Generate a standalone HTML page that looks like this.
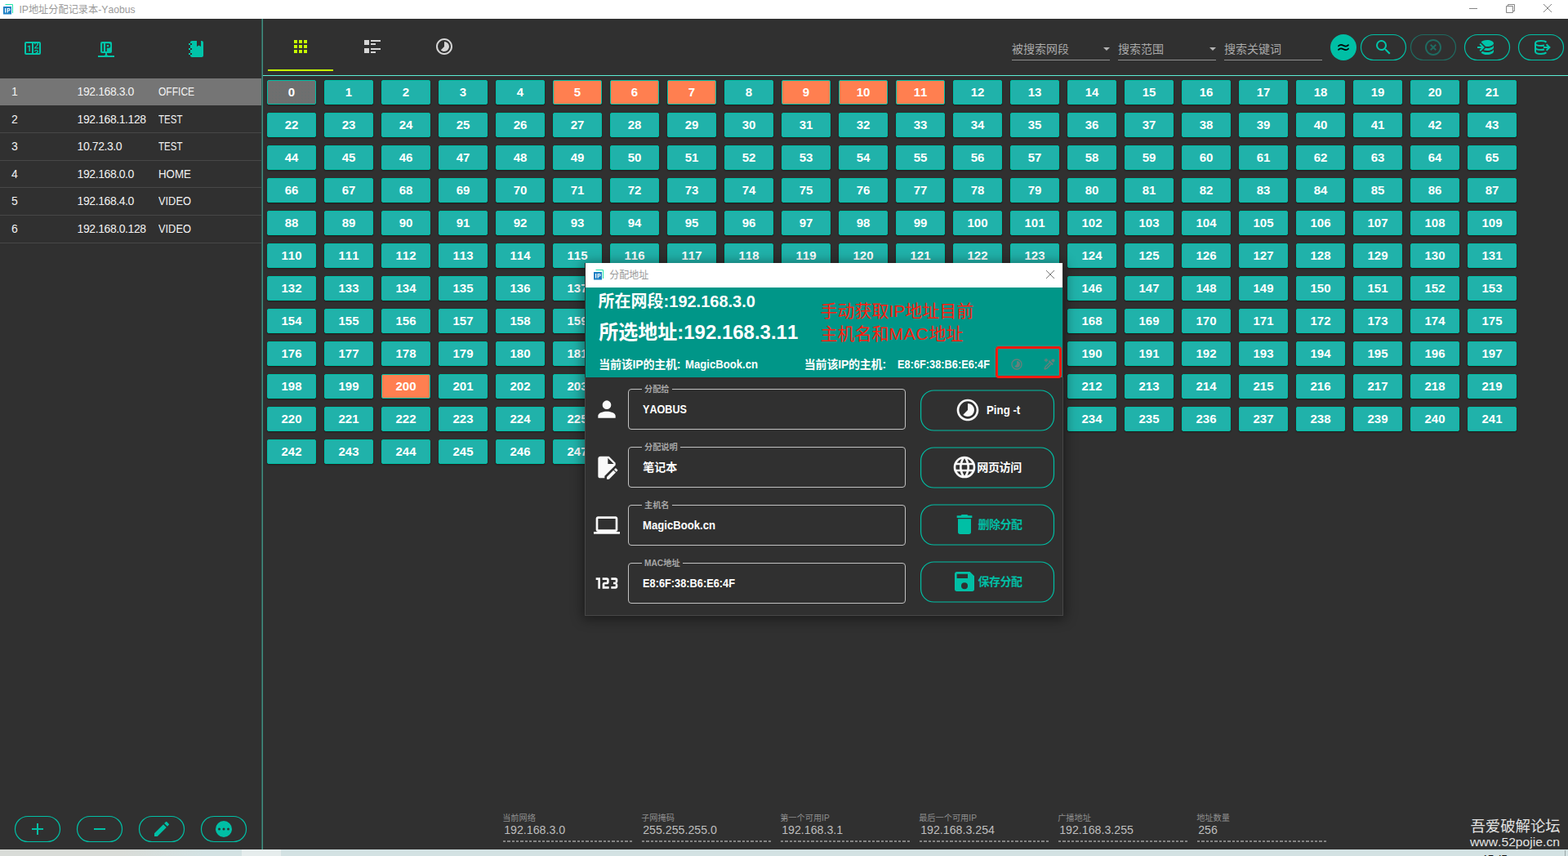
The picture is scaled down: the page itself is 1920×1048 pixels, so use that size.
<!DOCTYPE html>
<html lang="zh-CN"><head><meta charset="utf-8"><title>IP地址分配记录本-Yaobus</title>
<style>
*{box-sizing:border-box}
html,body{margin:0;padding:0;width:1920px;height:1048px;overflow:hidden;background:#303030}
#app{font-kerning:none;width:1920px;height:1048px;position:relative;overflow:hidden;background:#303030;font-family:"Liberation Sans","Noto Sans CJK SC",sans-serif;color:#fff}
.a{position:absolute}
.t{position:absolute;white-space:nowrap}
svg.i{position:absolute;fill:currentColor;overflow:visible}
svg.nf{fill:none}
.sx{display:inline-block;transform-origin:0 50%}
b{font-weight:bold}
/* title bar */
#titlebar{left:0;top:0;width:1920px;height:23px;background:#fff}
/* sidebar */
.row{left:0;width:320px;border-bottom:1px solid #474747}
.row.sel{background:#757575;border-bottom:0}
.rt{color:#f2f2f2}
/* pills */
/* grid */
#grid{left:327px;top:98px;width:1530px;display:grid;grid-template-columns:repeat(22,60px);column-gap:10px;row-gap:10px}
#grid div{height:30px;background:#20b2aa;border:1px solid #00bfa5;border-radius:2px;font-weight:bold;font-size:15px;line-height:28px;text-align:center;color:#fff;box-shadow:0 1px 2px rgba(0,0,0,.45)}
#grid div.o{background:#ff7f50}
#grid div.g{background:#6f6f6f radial-gradient(circle,#5d7373 .55px,transparent .75px) 0 0/4px 4px}
/* status */
.sl{color:#8e8e8e}
.sv{color:#bdbdbd}
.dash{position:absolute;height:2px;width:160px;top:1029px;background:repeating-linear-gradient(90deg,#8d8d8d 0,#8d8d8d 3.3px,transparent 3.3px,transparent 5.33px);opacity:.9}
/* dialog */
#dlg{left:716px;top:322px;width:586px;height:432px;background:#303030;box-shadow:0 2px 14px 2px rgba(0,0,0,.45)}
.fld{position:absolute;left:769px;width:340px;height:50px;border:1px solid #c2c2c2;border-radius:4px}
.fl{color:#a6a6a6;background:#303030;font-weight:bold}
.btn{position:absolute;left:1127px;width:164px;height:50.5px;border:1px solid #0e9a89;border-radius:20px}
.fv{font-weight:bold;color:#fff}
.teal{color:#00bfa5}
</style></head><body><div id="app">
<div id="titlebar" class="a"></div>
<svg class="i" viewBox="0 0 12 13" style="left:4px;top:5px;width:12px;height:13px"><rect x="0" y="3" width="10" height="9.500" fill="#1b7fc4"/><path d="M2.500 0.500h9v10.500" fill="none" stroke="#1ee6a8" stroke-width="1"/><path d="M2 5h1.200v5.500H2zM4.600 5h2.400a1.700 1.700 0 0 1 0 3.400H5.800v2.100H4.600zM5.800 6h1a.700.700 0 0 1 0 1.400h-1z" fill="#fff" fill-rule="evenodd"/></svg>
<div class="t" style="left:23.4px;top:5px;font-size:12.2px;line-height:14px;color:#9a9a9a">IP地址分配记录本-Yaobus</div>
<svg class="i nf" viewBox="0 0 140 23" style="left:1780px;top:0;width:140px;height:23px" stroke="#858585" stroke-width="1"><path d="M19 10.500h10"/><path d="M64.500 7.500h8v8h-8zM66.500 7.500v-2h8v8h-2"/><path d="M110 5l10 10M120 5l-10 10"/></svg>
<div class="a" style="left:320px;top:23px;width:1px;height:1017px;background:#2d645c"></div>
<div class="a" style="left:321px;top:23px;width:1px;height:1017px;background:#448d80"></div>
<div class="a" style="left:322px;top:92px;width:1598px;height:1px;background:#5cefd6"></div>
<svg class="i" viewBox="0 0 24 24" style="left:28px;top:47px;width:24px;height:24px;color:#00c5aa;"><path d="M4,4H20A2,2 0 0,1 22,6V18A2,2 0 0,1 20,20H4A2,2 0 0,1 2,18V6A2,2 0 0,1 4,4M4,6V18H11V6H4M20,18V6H18.76C19,6.54 18.95,7.07 18.95,7.13C18.88,7.8 18.41,8.5 18.24,8.75L15.91,11.3L19.23,11.28L19.24,12.5L14.04,12.47L14,11.47C14,11.47 17.05,8.24 17.2,7.95C17.34,7.67 17.91,6 16.5,6C15.27,6.05 15.41,7.3 15.41,7.3L13.87,7.31C13.87,7.31 13.88,6.65 14.25,6H13V18H15.58L15.57,17.14L16.54,17.13C16.54,17.13 17.45,16.97 17.46,16.08C17.5,15.08 16.65,15.08 16.5,15.08C16.37,15.08 15.43,15.13 15.43,15.95H13.91C13.91,15.95 13.95,13.89 16.5,13.89C19.1,13.89 18.96,15.91 18.96,15.91C18.96,15.91 19,17.16 17.85,17.63L18.37,18H20M8.92,16H7.42V10.2L5.62,10.76V9.53L8.76,8.41H8.92V16Z"/></svg>
<svg class="i" viewBox="0 0 24 24" style="left:118px;top:47px;width:24px;height:24px;color:#00c5aa;"><path fill-rule="evenodd" d="M7 4h10a2 2 0 0 1 2 2v10a2 2 0 0 1-2 2h-4v2l1.500 1h7.500v2H2v-2h7.500l1.500-1v-2H7a2 2 0 0 1-2-2V6a2 2 0 0 1 2-2zM7.200 6.300h1.700v9.600H7.200zM11.100 6.300h4.100a2 2 0 0 1 2 2v1.500a2 2 0 0 1-2 2h-2.400v4.100h-1.700zM12.800 7.900h2.500v2.300h-2.500z"/></svg>
<svg class="i" viewBox="0 0 24 24" style="left:228px;top:48px;width:24px;height:24px;color:#00c4a9;"><path d="M3,7V5H5V4C5,2.89 5.9,2 7,2H13V9L15.5,7.5L18,9V2H19C20.05,2 21,2.95 21,4V20C21,21.05 20.05,22 19,22H7C5.95,22 5,21.05 5,20V19H3V17H5V13H3V11H5V7H3M7,11H5V13H7V11M7,7V5H5V7H7M7,19V17H5V19H7Z"/></svg>
<div class="row a sel" style="top:96px;height:33px"></div>
<div class="t rt" style="left:14px;top:104px;font-size:14px;line-height:16px;">1</div>
<div class="t rt" style="left:94.6px;top:104px;font-size:14px;line-height:16px;"><span class="sx" style="letter-spacing:-0.42px">192.168.3.0</span></div>
<div class="t rt" style="left:194px;top:104px;font-size:14px;line-height:16px;"><span class="sx nm" style="transform:scaleX(0.859)">OFFICE</span></div>
<div class="row a" style="top:130px;height:33px"></div>
<div class="t rt" style="left:14px;top:138px;font-size:14px;line-height:16px;">2</div>
<div class="t rt" style="left:94.6px;top:138px;font-size:14px;line-height:16px;"><span class="sx" style="letter-spacing:-0.42px">192.168.1.128</span></div>
<div class="t rt" style="left:194px;top:138px;font-size:14px;line-height:16px;"><span class="sx nm" style="transform:scaleX(0.822)">TEST</span></div>
<div class="row a" style="top:163px;height:34px"></div>
<div class="t rt" style="left:14px;top:171px;font-size:14px;line-height:16px;">3</div>
<div class="t rt" style="left:94.6px;top:171px;font-size:14px;line-height:16px;"><span class="sx" style="letter-spacing:-0.42px">10.72.3.0</span></div>
<div class="t rt" style="left:194px;top:171px;font-size:14px;line-height:16px;"><span class="sx nm" style="transform:scaleX(0.822)">TEST</span></div>
<div class="row a" style="top:197px;height:33px"></div>
<div class="t rt" style="left:14px;top:205px;font-size:14px;line-height:16px;">4</div>
<div class="t rt" style="left:94.6px;top:205px;font-size:14px;line-height:16px;"><span class="sx" style="letter-spacing:-0.42px">192.168.0.0</span></div>
<div class="t rt" style="left:194px;top:205px;font-size:14px;line-height:16px;"><span class="sx nm" style="transform:scaleX(0.95)">HOME</span></div>
<div class="row a" style="top:230px;height:34px"></div>
<div class="t rt" style="left:14px;top:238px;font-size:14px;line-height:16px;">5</div>
<div class="t rt" style="left:94.6px;top:238px;font-size:14px;line-height:16px;"><span class="sx" style="letter-spacing:-0.42px">192.168.4.0</span></div>
<div class="t rt" style="left:194px;top:238px;font-size:14px;line-height:16px;"><span class="sx nm" style="transform:scaleX(0.916)">VIDEO</span></div>
<div class="row a" style="top:264px;height:34px"></div>
<div class="t rt" style="left:14px;top:272px;font-size:14px;line-height:16px;">6</div>
<div class="t rt" style="left:94.6px;top:272px;font-size:14px;line-height:16px;"><span class="sx" style="letter-spacing:-0.42px">192.168.0.128</span></div>
<div class="t rt" style="left:194px;top:272px;font-size:14px;line-height:16px;"><span class="sx nm" style="transform:scaleX(0.916)">VIDEO</span></div>
<svg class="i nf" viewBox="0 0 56 32" style="left:18px;top:999px;width:56px;height:32px"><rect x="0.500" y="0.500" width="55" height="31" rx="15.500" stroke="#00bfa5" stroke-width="1.200"/></svg>
<svg class="i" viewBox="0 0 24 24" style="left:34px;top:1003px;width:24px;height:24px;color:#00bfa5;"><path d="M19,13H13V19H11V13H5V11H11V5H13V11H19V13Z"/></svg>
<svg class="i nf" viewBox="0 0 56 32" style="left:94px;top:999px;width:56px;height:32px"><rect x="0.500" y="0.500" width="55" height="31" rx="15.500" stroke="#00bfa5" stroke-width="1.200"/></svg>
<svg class="i" viewBox="0 0 24 24" style="left:110px;top:1003px;width:24px;height:24px;color:#00bfa5;"><path d="M19,13H5V11H19V13Z"/></svg>
<svg class="i nf" viewBox="0 0 56 32" style="left:170px;top:999px;width:56px;height:32px"><rect x="0.500" y="0.500" width="55" height="31" rx="15.500" stroke="#00bfa5" stroke-width="1.200"/></svg>
<svg class="i" viewBox="0 0 24 24" style="left:186px;top:1003px;width:24px;height:24px;color:#00bfa5;"><path d="M20.71,7.04C21.1,6.65 21.1,6 20.71,5.63L18.37,3.29C18,2.9 17.35,2.9 16.96,3.29L15.12,5.12L18.87,8.87M3,17.25V21H6.75L17.81,9.93L14.06,6.18L3,17.25Z"/></svg>
<svg class="i nf" viewBox="0 0 56 32" style="left:246px;top:999px;width:56px;height:32px"><rect x="0.500" y="0.500" width="55" height="31" rx="15.500" stroke="#00bfa5" stroke-width="1.200"/></svg>
<svg class="i" viewBox="0 0 24 24" style="left:262px;top:1003px;width:24px;height:24px;color:#00bfa5;"><path d="M12,2A10,10 0 0,1 22,12A10,10 0 0,1 12,22A10,10 0 0,1 2,12A10,10 0 0,1 12,2M12,10.5A1.5,1.500 0 0,0 10.5,12A1.5,1.500 0 0,0 12,13.5A1.5,1.500 0 0,0 13.5,12A1.5,1.500 0 0,0 12,10.5M6.5,10.5A1.5,1.500 0 0,0 5,12A1.5,1.500 0 0,0 6.5,13.5A1.5,1.500 0 0,0 8,12A1.5,1.500 0 0,0 6.5,10.5M17.5,10.5A1.5,1.500 0 0,0 16,12A1.5,1.500 0 0,0 17.5,13.5A1.5,1.500 0 0,0 19,12A1.5,1.500 0 0,0 17.5,10.5Z"/></svg>
<svg class="i" viewBox="0 0 24 24" style="left:356px;top:45px;width:24px;height:24px;color:#c6ff00;"><path d="M16,20H20V16H16M16,14H20V10H16M10,8H14V4H10M16,8H20V4H16M10,14H14V10H10M4,14H8V10H4M4,20H8V16H4M10,20H14V16H10M4,8H8V4H4V8Z"/></svg>
<svg class="i" viewBox="0 0 24 24" style="left:444px;top:45px;width:24px;height:24px;color:#d6d6d6;"><path d="M2 4h6v6H2zM10 4h12v2H10zM10 8h6v2h-6zM2 14h6v6H2zM10 14h12v2H10zM10 18h6v2h-6z"/></svg>
<svg class="i" viewBox="0 0 24 24" style="left:532px;top:45px;width:24px;height:24px;color:#d6d6d6;"><path d="M12,2C6.47,2 2,6.47 2,12C2,17.53 6.47,22 12,22C17.53,22 22,17.53 22,12C22,6.47 17.53,2 12,2M12,4A8,8 0 0,1 20,12A8,8 0 0,1 12,20A8,8 0 0,1 4,12A8,8 0 0,1 12,4M12,6V12L7.76,16.24C8.88,17.37 10.41,18 12,18A6,6 0 0,0 18,12A6,6 0 0,0 12,6Z"/></svg>
<div class="a" style="left:328px;top:85px;width:80px;height:2px;background:#c6ff00"></div>
<div class="t" style="left:1239px;top:52px;font-size:14px;line-height:16px;color:#a9a9a9">被搜索网段</div>
<div class="a" style="left:1239px;top:73px;width:120px;height:1px;background:#8f8f8f"></div>
<div class="t" style="left:1369px;top:52px;font-size:14px;line-height:16px;color:#a9a9a9">搜索范围</div>
<div class="a" style="left:1369px;top:73px;width:120px;height:1px;background:#8f8f8f"></div>
<div class="t" style="left:1499px;top:52px;font-size:14px;line-height:16px;color:#a9a9a9">搜索关键词</div>
<div class="a" style="left:1499px;top:73px;width:120px;height:1px;background:#8f8f8f"></div>
<svg class="i" viewBox="0 0 8 4" style="left:1351px;top:58px;width:8px;height:4px;color:#b4b4b4"><path d="M0 0h8L4 4z"/></svg>
<svg class="i" viewBox="0 0 8 4" style="left:1481px;top:58px;width:8px;height:4px;color:#b4b4b4"><path d="M0 0h8L4 4z"/></svg>
<div class="a" style="left:1629px;top:42px;width:32px;height:32px;border-radius:16px;background:#00bfa5"></div>
<svg class="i nf" viewBox="0 0 14 10" style="left:1638px;top:53px;width:14px;height:10px" stroke="#000" stroke-width="1.700" stroke-linecap="round"><path d="M1 3.300c1.800-2 3.600-2 6-.600s4.200 1.400 6-.600M1 7.900c1.800-2 3.600-2 6-.600s4.200 1.400 6-.600"/></svg>
<svg class="i nf" viewBox="0 0 56 32" style="left:1666px;top:42px;width:56px;height:32px"><rect x="0.500" y="0.500" width="55" height="31" rx="15.500" stroke="#00bfa5" stroke-width="1.200"/></svg>
<svg class="i" viewBox="0 0 24 24" style="left:1682px;top:46px;width:24px;height:24px;color:#00c5aa;"><path d="M9.5,3A6.5,6.5 0 0,1 16,9.5C16,11.11 15.41,12.59 14.44,13.73L14.71,14H15.5L20.5,19L19,20.5L14,15.5V14.71L13.73,14.44C12.59,15.41 11.11,16 9.5,16A6.5,6.5 0 0,1 3,9.5A6.5,6.5 0 0,1 9.5,3M9.5,5C7,5 5,7 5,9.5C5,12 7,14 9.5,14C12,14 14,12 14,9.5C14,7 12,5 9.5,5Z"/></svg>
<svg class="i nf" viewBox="0 0 56 32" style="left:1727px;top:42px;width:56px;height:32px"><rect x="0.500" y="0.500" width="55" height="31" rx="15.500" stroke="#1f6b61" stroke-width="1.200"/></svg>
<svg class="i" viewBox="0 0 24 24" style="left:1743px;top:46px;width:24px;height:24px;color:#1f6b61;"><path d="M12,20C7.59,20 4,16.41 4,12C4,7.59 7.59,4 12,4C16.41,4 20,7.59 20,12C20,16.41 16.41,20 12,20M12,2C6.47,2 2,6.47 2,12C2,17.53 6.47,22 12,22C17.53,22 22,17.53 22,12C22,6.47 17.53,2 12,2M14.59,8L12,10.59L9.41,8L8,9.41L10.59,12L8,14.59L9.41,16L12,13.41L14.59,16L16,14.59L13.41,12L16,9.41L14.59,8Z"/></svg>
<svg class="i nf" viewBox="0 0 56 32" style="left:1793px;top:42px;width:56px;height:32px"><rect x="0.500" y="0.500" width="55" height="31" rx="15.500" stroke="#00bfa5" stroke-width="1.200"/></svg>
<svg class="i" viewBox="0 0 24 24" style="left:1809px;top:46px;width:24px;height:24px;color:#00c5aa;"><path d="M12,3C8.59,3 5.69,4.07 4.54,5.57L9.79,10.82C10.5,10.93 11.22,11 12,11C16.42,11 20,9.21 20,7C20,4.79 16.42,3 12,3M3.92,7.08L2.5,8.5L5,11H0V13H5L2.5,15.5L3.92,16.92L8.84,12M20,9C20,11.21 16.42,13 12,13C11.34,13 10.7,12.95 10.09,12.87L7.62,15.34C8.88,15.75 10.38,16 12,16C16.42,16 20,14.21 20,12M20,14C20,16.21 16.42,18 12,18C9.72,18 7.67,17.5 6.21,16.75L4.53,18.43C5.68,19.93 8.59,21 12,21C16.42,21 20,19.21 20,17"/></svg>
<svg class="i nf" viewBox="0 0 56 32" style="left:1859px;top:42px;width:56px;height:32px"><rect x="0.500" y="0.500" width="55" height="31" rx="15.500" stroke="#00bfa5" stroke-width="1.200"/></svg>
<svg class="i" viewBox="0 0 24 24" style="left:1875px;top:46px;width:24px;height:24px;color:#00c5aa;"><g fill="none" stroke="currentColor" stroke-width="2" stroke-linecap="butt"><path d="M5 7v10"/><path d="M5 7c0-1.900 3-3 7-3 2.900 0 5.300.600 6.400 1.700"/><path d="M5 7c0 1.900 3 3 7 3 1.500 0 2.900-.200 4-.500"/><path d="M5 12c0 1.900 3 3 7 3 1.500 0 2.900-.200 4-.500"/><path d="M5 17c0 1.900 3 3 7 3 2.900 0 5.300-.600 6.400-1.700"/><path d="M15 12h7.500"/><path d="M18.600 8.200l3.800 3.800-3.800 3.800"/></g></svg>
<div id="grid" class="a"><div class="g">0</div><div>1</div><div>2</div><div>3</div><div>4</div><div class="o">5</div><div class="o">6</div><div class="o">7</div><div>8</div><div class="o">9</div><div class="o">10</div><div class="o">11</div><div>12</div><div>13</div><div>14</div><div>15</div><div>16</div><div>17</div><div>18</div><div>19</div><div>20</div><div>21</div><div>22</div><div>23</div><div>24</div><div>25</div><div>26</div><div>27</div><div>28</div><div>29</div><div>30</div><div>31</div><div>32</div><div>33</div><div>34</div><div>35</div><div>36</div><div>37</div><div>38</div><div>39</div><div>40</div><div>41</div><div>42</div><div>43</div><div>44</div><div>45</div><div>46</div><div>47</div><div>48</div><div>49</div><div>50</div><div>51</div><div>52</div><div>53</div><div>54</div><div>55</div><div>56</div><div>57</div><div>58</div><div>59</div><div>60</div><div>61</div><div>62</div><div>63</div><div>64</div><div>65</div><div>66</div><div>67</div><div>68</div><div>69</div><div>70</div><div>71</div><div>72</div><div>73</div><div>74</div><div>75</div><div>76</div><div>77</div><div>78</div><div>79</div><div>80</div><div>81</div><div>82</div><div>83</div><div>84</div><div>85</div><div>86</div><div>87</div><div>88</div><div>89</div><div>90</div><div>91</div><div>92</div><div>93</div><div>94</div><div>95</div><div>96</div><div>97</div><div>98</div><div>99</div><div>100</div><div>101</div><div>102</div><div>103</div><div>104</div><div>105</div><div>106</div><div>107</div><div>108</div><div>109</div><div>110</div><div>111</div><div>112</div><div>113</div><div>114</div><div>115</div><div>116</div><div>117</div><div>118</div><div>119</div><div>120</div><div>121</div><div>122</div><div>123</div><div>124</div><div>125</div><div>126</div><div>127</div><div>128</div><div>129</div><div>130</div><div>131</div><div>132</div><div>133</div><div>134</div><div>135</div><div>136</div><div>137</div><div>138</div><div>139</div><div>140</div><div>141</div><div>142</div><div>143</div><div>144</div><div>145</div><div>146</div><div>147</div><div>148</div><div>149</div><div>150</div><div>151</div><div>152</div><div>153</div><div>154</div><div>155</div><div>156</div><div>157</div><div>158</div><div>159</div><div>160</div><div>161</div><div>162</div><div>163</div><div>164</div><div>165</div><div>166</div><div>167</div><div>168</div><div>169</div><div>170</div><div>171</div><div>172</div><div>173</div><div>174</div><div>175</div><div>176</div><div>177</div><div>178</div><div>179</div><div>180</div><div>181</div><div>182</div><div>183</div><div>184</div><div>185</div><div>186</div><div>187</div><div>188</div><div>189</div><div>190</div><div>191</div><div>192</div><div>193</div><div>194</div><div>195</div><div>196</div><div>197</div><div>198</div><div>199</div><div class="o">200</div><div>201</div><div>202</div><div>203</div><div>204</div><div>205</div><div>206</div><div>207</div><div>208</div><div>209</div><div>210</div><div>211</div><div>212</div><div>213</div><div>214</div><div>215</div><div>216</div><div>217</div><div>218</div><div>219</div><div>220</div><div>221</div><div>222</div><div>223</div><div>224</div><div>225</div><div>226</div><div>227</div><div>228</div><div>229</div><div>230</div><div>231</div><div>232</div><div>233</div><div>234</div><div>235</div><div>236</div><div>237</div><div>238</div><div>239</div><div>240</div><div>241</div><div>242</div><div>243</div><div>244</div><div>245</div><div>246</div><div>247</div><div>248</div><div>249</div><div>250</div><div>251</div><div>252</div><div>253</div><div>254</div><div class="g">255</div></div>
<div class="t sl" style="left:615.2px;top:996px;font-size:10.2px;line-height:11px;">当前网络</div>
<div class="t sv" style="left:617.2px;top:1008px;font-size:14.2px;line-height:16px;"><span>192.168.3.0</span></div>
<div class="dash" style="left:616px"></div>
<div class="t sl" style="left:785.2px;top:996px;font-size:10.2px;line-height:11px;">子网掩码</div>
<div class="t sv" style="left:787.2px;top:1008px;font-size:14.2px;line-height:16px;"><span>255.255.255.0</span></div>
<div class="dash" style="left:786px"></div>
<div class="t sl" style="left:955.2px;top:996px;font-size:10.2px;line-height:11px;">第一个可用IP</div>
<div class="t sv" style="left:957.2px;top:1008px;font-size:14.2px;line-height:16px;"><span>192.168.3.1</span></div>
<div class="dash" style="left:956px"></div>
<div class="t sl" style="left:1125.2px;top:996px;font-size:10.2px;line-height:11px;">最后一个可用IP</div>
<div class="t sv" style="left:1127.2px;top:1008px;font-size:14.2px;line-height:16px;"><span>192.168.3.254</span></div>
<div class="dash" style="left:1126px"></div>
<div class="t sl" style="left:1295.2px;top:996px;font-size:10.2px;line-height:11px;">广播地址</div>
<div class="t sv" style="left:1297.2px;top:1008px;font-size:14.2px;line-height:16px;"><span>192.168.3.255</span></div>
<div class="dash" style="left:1296px"></div>
<div class="t sl" style="left:1465.2px;top:996px;font-size:10.2px;line-height:11px;">地址数量</div>
<div class="t sv" style="left:1467.2px;top:1008px;font-size:14.2px;line-height:16px;"><span>256</span></div>
<div class="dash" style="left:1466px"></div>
<div class="t" style="left:1800.4px;top:1001px;font-size:18.4px;line-height:21px;color:#e2e2e2">吾爱破解论坛</div>
<div class="t" style="left:1800.4px;top:1023px;font-size:14px;line-height:16px;color:#e2e2e2"><span class="sx" style="transform:scaleX(1.122)">www.52pojie.cn</span></div>
<div class="a" style="left:0;top:1040px;width:1920px;height:8px;background:linear-gradient(90deg,#d9dcd8 0,#d9dcd8 150px,#d3e2e3 250px,#d3e2e3 100%)"></div>
<div class="a" style="left:296px;top:1040px;width:48px;height:8px;background:#e6eded"></div>
<div class="a" style="left:1916px;top:1041px;width:1px;height:7px;background:#9aa5a6"></div>
<div class="t" style="left:1815.5px;top:1045px;font-size:12px;line-height:14px;color:#111">17:47</div>
<div id="dlg" class="a"></div>
<div class="a" style="left:716px;top:462px;width:1px;height:292px;background:#474747"></div>
<div class="a" style="left:1301px;top:462px;width:1px;height:292px;background:#474747"></div>
<div class="a" style="left:716px;top:753px;width:586px;height:1px;background:#474747"></div>
<div class="a" style="left:717px;top:322px;width:584px;height:30px;background:#fff"></div>
<svg class="i" viewBox="0 0 12 13" style="left:727px;top:329.500px;width:12px;height:13px"><rect x="0" y="3" width="10" height="9.500" fill="#1b7fc4"/><path d="M2.500 0.500h9v10.500" fill="none" stroke="#1ee6a8" stroke-width="1"/><path d="M2 5h1.200v5.500H2zM4.600 5h2.400a1.700 1.700 0 0 1 0 3.400H5.800v2.100H4.600zM5.800 6h1a.700.700 0 0 1 0 1.400h-1z" fill="#fff" fill-rule="evenodd"/></svg>
<div class="t" style="left:746.2px;top:330px;font-size:12px;line-height:14px;color:#9a9a9a">分配地址</div>
<svg class="i nf" viewBox="0 0 10 10" style="left:1281px;top:331px;width:10px;height:10px" stroke="#7a7a7a" stroke-width="1"><path d="M0 0l10 10M10 0L0 10"/></svg>
<div class="a" style="left:717px;top:352px;width:584px;height:110px;background:#009688"></div>
<div class="t" style="left:732.6px;top:358px;font-size:20px;line-height:22px;"><b>所在网段</b><b>:192.168.3.0</b></div>
<div class="t" style="left:733.2px;top:393px;font-size:24px;line-height:27px;"><b>所选地址</b><b>:192.168.3.11</b></div>
<div class="t" style="left:733.2px;top:438px;font-size:14px;line-height:16px;letter-spacing:-0.2px"><b>当前该IP的主机:</b></div>
<div class="t" style="left:838.6px;top:438px;font-size:14px;line-height:16px;"><b class="sx" style="transform:scaleX(0.938)">MagicBook.cn</b></div>
<div class="t" style="left:984.8px;top:438px;font-size:14px;line-height:16px;letter-spacing:-0.2px"><b>当前该IP的主机:</b></div>
<div class="t" style="left:1098.8px;top:438px;font-size:14px;line-height:16px;"><b class="sx" style="transform:scaleX(0.913)">E8:6F:38:B6:E6:4F</b></div>
<div class="t" style="left:1004.5px;top:369px;font-size:21px;line-height:23px;color:#ff1e10">手动获取IP地址目前</div>
<div class="t" style="left:1004.5px;top:397px;font-size:21px;line-height:23px;color:#ff1e10">主机名和<span style="letter-spacing:0.800px">MAC</span>地址</div>
<svg class="i" viewBox="0 0 24 24" style="left:1237px;top:438px;width:16px;height:16px;color:#66807b;"><path d="M12,2C6.47,2 2,6.47 2,12C2,17.53 6.47,22 12,22C17.53,22 22,17.53 22,12C22,6.47 17.53,2 12,2M12,4A8,8 0 0,1 20,12A8,8 0 0,1 12,20A8,8 0 0,1 4,12A8,8 0 0,1 12,4M12,6V12L7.76,16.24C8.88,17.37 10.41,18 12,18A6,6 0 0,0 18,12A6,6 0 0,0 12,6Z"/></svg>
<svg class="i" viewBox="0 0 24 24" style="left:1277px;top:438px;width:16px;height:16px;color:#66807b;"><path d="M19.350,11.720L17.220,13.850L15.810,12.430L8.100,20.140L3.500,22L2,20.500L3.860,15.900L11.570,8.190L10.150,6.780L12.280,4.650L19.350,11.720M16.760,3C17.930,1.830 19.830,1.830 21,3C22.170,4.170 22.170,6.070 21,7.240L19.080,9.160L14.840,4.920L16.760,3M5.560,17.030L4.500,19.500L6.970,18.440L14.400,11L13,9.600L5.560,17.030Z"/><path d="M5 1h2v2.500h2.500v2H7V8H5V5.500H2.500v-2H5z"/></svg>
<div class="a" style="left:1219px;top:423.500px;width:80.500px;height:39.500px;border:3px solid #ff1a10;border-radius:4px"></div>
<svg class="i" viewBox="0 0 24 24" style="left:727px;top:485px;width:32px;height:32px;color:#fafafa;"><path d="M12,4A4,4 0 0,1 16,8A4,4 0 0,1 12,12A4,4 0 0,1 8,8A4,4 0 0,1 12,4M12,14C16.42,14 20,15.79 20,18V20H4V18C4,15.79 7.58,14 12,14Z"/></svg>
<div class="fld" style="top:476px"></div>
<div class="t fl" style="left:786px;top:471px;font-size:10.2px;line-height:11px;padding:0 3.500px 0 3px">分配给</div>
<div class="t fv" style="left:787.3px;top:493px;font-size:14px;line-height:16px;"><span class="sx" style="transform:scaleX(0.9)">YAOBUS</span></div>
<svg class="i" viewBox="0 0 24 24" style="left:727px;top:556px;width:32px;height:32px;color:#fafafa;"><path d="M6,2C4.890,2 4,2.890 4,4V20A2,2 0 0,0 6,22H10V20.090L20,10.090V8L14,2H6M13,3.500L18.500,9H13V3.500M20.150,13C20,13 19.860,13.050 19.750,13.160L18.730,14.180L20.820,16.270L21.840,15.250C22.050,15.030 22.050,14.670 21.840,14.460L20.540,13.160C20.430,13.050 20.290,13 20.150,13M18.140,14.770L12,20.920V23H14.080L20.230,16.850L18.140,14.770Z"/></svg>
<div class="fld" style="top:547px"></div>
<div class="t fl" style="left:786px;top:542px;font-size:10.2px;line-height:11px;padding:0 3.500px 0 3px">分配说明</div>
<div class="t fv" style="left:787.3px;top:564px;font-size:14px;line-height:16px;">笔记本</div>
<svg class="i" viewBox="0 0 24 24" style="left:727px;top:627px;width:32px;height:32px;color:#fafafa;"><path d="M4,6H20V16H4M20,18A2,2 0 0,0 22,16V6C22,4.890 21.100,4 20,4H4C2.890,4 2,4.890 2,6V16A2,2 0 0,0 4,18H0V20H24V18H20Z"/></svg>
<div class="fld" style="top:618px"></div>
<div class="t fl" style="left:786px;top:613px;font-size:10.2px;line-height:11px;padding:0 3.500px 0 3px">主机名</div>
<div class="t fv" style="left:787.3px;top:635px;font-size:14px;line-height:16px;"><span class="sx" style="transform:scaleX(0.938)">MagicBook.cn</span></div>
<svg class="i" viewBox="0 0 24 24" style="left:727px;top:698px;width:32px;height:32px;color:#fafafa;"><path d="M4,17V9H2V7H6V17H4M22,15C22,16.110 21.100,17 20,17H16V15H20V13H18V11H20V9H16V7H20A2,2 0 0,1 22,9V10.500A1.500,1.500 0 0,1 20.500,12A1.500,1.500 0 0,1 22,13.500V15M14,15V17H8V13C8,11.890 8.900,11 10,11H12V9H8V7H12A2,2 0 0,1 14,9V11C14,12.110 13.100,13 12,13H10V15H14Z"/></svg>
<div class="fld" style="top:689px"></div>
<div class="t fl" style="left:786px;top:684px;font-size:10.2px;line-height:11px;padding:0 3.500px 0 3px">MAC地址</div>
<div class="t fv" style="left:787.3px;top:706px;font-size:14px;line-height:16px;"><span class="sx" style="transform:scaleX(0.913)">E8:6F:38:B6:E6:4F</span></div>
<svg class="i" style="left:1120px;top:474px;width:180px;height:58px" viewBox="1120 474 180 58"><rect x="1127.600" y="478" width="162.900" height="49" rx="16" fill="none" stroke="#00bfa5" stroke-width="1.200"/></svg>
<svg class="i" viewBox="0 0 24 24" style="left:1169px;top:486.25px;width:32px;height:32px;color:#fafafa;"><path d="M12,2C6.47,2 2,6.47 2,12C2,17.53 6.47,22 12,22C17.53,22 22,17.53 22,12C22,6.47 17.53,2 12,2M12,4A8,8 0 0,1 20,12A8,8 0 0,1 12,20A8,8 0 0,1 4,12A8,8 0 0,1 12,4M12,6V12L7.76,16.24C8.88,17.37 10.41,18 12,18A6,6 0 0,0 18,12A6,6 0 0,0 12,6Z"/></svg>
<div class="t" style="left:1208px;top:494px;font-size:14px;line-height:16px;"><b class="sx" style="transform:scaleX(0.948)">Ping -t</b></div>
<svg class="i" style="left:1120px;top:544px;width:180px;height:58px" viewBox="1120 544 180 58"><rect x="1127.600" y="548" width="162.900" height="49" rx="16" fill="none" stroke="#00bfa5" stroke-width="1.200"/></svg>
<svg class="i" viewBox="0 0 24 24" style="left:1165px;top:556.25px;width:32px;height:32px;color:#fafafa;"><path d="M16.360,14C16.440,13.340 16.500,12.680 16.500,12C16.500,11.320 16.440,10.660 16.360,10H19.740C19.900,10.640 20,11.310 20,12C20,12.690 19.900,13.360 19.740,14M14.590,19.560C15.190,18.450 15.650,17.250 15.970,16H18.920C17.960,17.650 16.430,18.930 14.590,19.560M14.340,14H9.660C9.560,13.340 9.500,12.680 9.500,12C9.500,11.320 9.560,10.650 9.660,10H14.340C14.430,10.650 14.500,11.320 14.500,12C14.500,12.680 14.430,13.340 14.340,14M12,19.960C11.170,18.760 10.500,17.430 10.090,16H13.910C13.500,17.430 12.830,18.760 12,19.960M8,8H5.080C6.030,6.340 7.570,5.060 9.400,4.440C8.800,5.550 8.350,6.750 8,8M5.080,16H8C8.350,17.250 8.800,18.450 9.400,19.560C7.570,18.930 6.030,17.650 5.080,16M4.260,14C4.100,13.360 4,12.690 4,12C4,11.310 4.100,10.640 4.260,10H7.640C7.560,10.660 7.500,11.320 7.500,12C7.500,12.680 7.560,13.340 7.640,14M12,4.030C12.830,5.230 13.500,6.570 13.910,8H10.090C10.500,6.570 11.170,5.230 12,4.030M18.920,8H15.970C15.650,6.750 15.190,5.550 14.590,4.440C16.430,5.070 17.960,6.340 18.920,8M12,2C6.470,2 2,6.500 2,12A10,10 0 0,0 12,22A10,10 0 0,0 22,12A10,10 0 0,0 12,2Z"/></svg>
<div class="t" style="left:1196.2px;top:564px;font-size:14px;line-height:16px;letter-spacing:-0.3px"><b>网页访问</b></div>
<svg class="i" style="left:1120px;top:614px;width:180px;height:58px" viewBox="1120 614 180 58"><rect x="1127.600" y="618" width="162.900" height="49" rx="16" fill="none" stroke="#00bfa5" stroke-width="1.200"/></svg>
<svg class="i" viewBox="0 0 24 24" style="left:1165px;top:626.25px;width:32px;height:32px;color:#00bfa5;"><path d="M19,4H15.500L14.500,3H9.500L8.500,4H5V6H19M6,19A2,2 0 0,0 8,21H16A2,2 0 0,0 18,19V7H6V19Z"/></svg>
<div class="t teal" style="left:1197.5px;top:634px;font-size:14px;line-height:16px;letter-spacing:-0.5px"><b>删除分配</b></div>
<svg class="i" style="left:1120px;top:684px;width:180px;height:58px" viewBox="1120 684 180 58"><rect x="1127.600" y="688" width="162.900" height="49" rx="16" fill="none" stroke="#00bfa5" stroke-width="1.200"/></svg>
<svg class="i" viewBox="0 0 24 24" style="left:1165px;top:696.25px;width:32px;height:32px;color:#00bfa5;"><path d="M15,9H5V5H15M12,19A3,3 0 0,1 9,16A3,3 0 0,1 12,13A3,3 0 0,1 15,16A3,3 0 0,1 12,19M17,3H5C3.890,3 3,3.900 3,5V19A2,2 0 0,0 5,21H19A2,2 0 0,0 21,19V7L17,3Z"/></svg>
<div class="t teal" style="left:1197.5px;top:704px;font-size:14px;line-height:16px;letter-spacing:-0.5px"><b>保存分配</b></div>
</div></body></html>
